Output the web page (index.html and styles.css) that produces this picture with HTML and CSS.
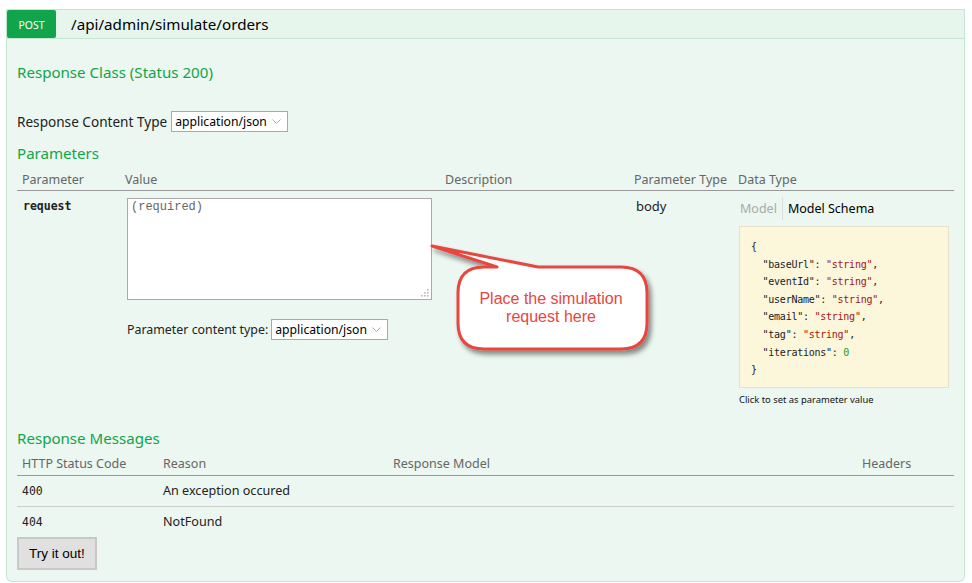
FILE: index.html
```html
<!DOCTYPE html>
<html>
<head>
<meta charset="utf-8">
<link rel="stylesheet" href="styles.css">
</head>
<body>
<div class="op">
  <div class="heading">
    <span class="badge">POST</span>
    <span class="path">/api/admin/simulate/orders</span>
  </div>
  <div class="content">
    <h4 class="h-class">Response Class (Status 200)</h4>
    <div class="ctype">
      <span class="ctype-label">Response Content Type</span>
      <div class="select">application/json<svg class="caret" width="9" height="6" viewBox="0 0 9 6"><polyline points="0.5,0.5 4.5,4.5 8.5,0.5" fill="none" stroke="#aaa" stroke-width="1"/></svg></div>
    </div>
    <h4 class="h-params">Parameters</h4>
    <table class="params">
      <colgroup><col class="c1"><col class="c2"><col class="c3"><col class="c4"><col class="c5"></colgroup>
      <thead>
        <tr><th>Parameter</th><th>Value</th><th>Description</th><th>Parameter Type</th><th>Data Type</th></tr>
      </thead>
      <tbody>
        <tr>
          <td class="pname">request</td>
          <td class="pvalue">
            <div class="ta-wrap">
              <textarea class="body-ta" placeholder="(required)"></textarea>
              <svg class="grip" width="8" height="8" viewBox="0 0 8 8">
                <rect x="6" y="0" width="1.6" height="1.6" fill="#bbb"/>
                <rect x="3" y="3" width="1.6" height="1.6" fill="#bbb"/>
                <rect x="6" y="3" width="1.6" height="1.6" fill="#bbb"/>
                <rect x="0" y="6" width="1.6" height="1.6" fill="#bbb"/>
                <rect x="3" y="6" width="1.6" height="1.6" fill="#bbb"/>
                <rect x="6" y="6" width="1.6" height="1.6" fill="#bbb"/>
              </svg>
            </div>
            <div class="pct">
              <span>Parameter content type:</span>
              <div class="select">application/json<svg class="caret" width="9" height="6" viewBox="0 0 9 6"><polyline points="0.5,0.5 4.5,4.5 8.5,0.5" fill="none" stroke="#aaa" stroke-width="1"/></svg></div>
            </div>
          </td>
          <td></td>
          <td class="ptype">body</td>
          <td class="dtype">
            <div class="tabs"><span class="tab-off">Model</span><span class="tab-on">Model Schema</span></div>
            <div class="schema">
              <div class="ln">{</div>
              <div class="ln">  <span class="k">"baseUrl"</span>: <span class="s">"string"</span>,</div>
              <div class="ln">  <span class="k">"eventId"</span>: <span class="s">"string"</span>,</div>
              <div class="ln">  <span class="k">"userName"</span>: <span class="s">"string"</span>,</div>
              <div class="ln">  <span class="k">"email"</span>: <span class="s">"string"</span>,</div>
              <div class="ln">  <span class="k">"tag"</span>: <span class="s">"string"</span>,</div>
              <div class="ln">  <span class="k">"iterations"</span>: <span class="n">0</span></div>
              <div class="ln">}</div>
            </div>
            <div class="hint">Click to set as parameter value</div>
          </td>
        </tr>
      </tbody>
    </table>
    <h4 class="h-resp">Response Messages</h4>
    <table class="resp">
      <colgroup><col class="r1"><col class="r2"><col class="r3"><col class="r4"></colgroup>
      <thead>
        <tr><th>HTTP Status Code</th><th>Reason</th><th>Response Model</th><th>Headers</th></tr>
      </thead>
      <tbody>
        <tr class="first"><td class="code">400</td><td>An exception occured</td><td></td><td></td></tr>
        <tr class="second"><td class="code">404</td><td>NotFound</td><td></td><td></td></tr>
      </tbody>
    </table>
    <button class="try">Try it out!</button>
  </div>
</div>

<svg class="callout" width="972" height="583" viewBox="0 0 972 583">
  <defs>
    <filter id="sh" x="-20%" y="-20%" width="150%" height="160%">
      <feGaussianBlur in="SourceAlpha" stdDeviation="2.5"/>
      <feOffset dx="3" dy="4" result="b"/>
      <feComponentTransfer><feFuncA type="linear" slope="0.45"/></feComponentTransfer>
      <feMerge><feMergeNode/><feMergeNode in="SourceGraphic"/></feMerge>
    </filter>
  </defs>
  <path filter="url(#sh)" d="M 484 267 L 497 267 L 432 246 L 538 267 L 621 267 Q 647 267 647 293 L 647 323 Q 647 349 621 349 L 484 349 Q 458 349 458 323 L 458 293 Q 458 267 484 267 Z" fill="#ffffff" stroke="#e8463f" stroke-width="3" stroke-linejoin="round"/>
  <text class="callout-text" x="551" y="304" text-anchor="middle">Place the simulation</text>
  <text class="callout-text" x="551" y="322" text-anchor="middle">request here</text>
</svg>
</body>
</html>
```

FILE: styles.css
```css
html, body {
  margin: 0;
  padding: 0;
  background: #ffffff;
}
body {
  position: relative;
  width: 972px;
  height: 583px;
  overflow: hidden;
  font-family: "Noto Sans", "Open Sans", sans-serif;
  font-size: 13px;
  color: #222;
}
.op {
  margin: 9px 0 0 6px;
  width: 959px;
}
.heading {
  display: flex;
  align-items: center;
  height: 28px;
  border: 1px solid #c3e8d1;
  background: #e7f6ec;
}
.badge {
  width: 49px;
  height: 28px;
  background: #10a54a;
  color: #fff;
  border-radius: 2px;
  font-size: 10.5px;
  line-height: 31px;
  text-align: center;
}
.path {
  margin-left: 15px;
  font-size: 15.2px;
  color: #000;
  line-height: 20px;
}
.content {
  border: 1px solid #c3e8d1;
  border-top: none;
  background: #ebf7f0;
  padding: 10px 10px 11px 10px;
  border-radius: 0 0 6px 6px;
}
h4 {
  margin: 0;
  font-weight: normal;
  font-size: 15.1px;
  line-height: 20px;
  color: #10a54a;
}
.h-class { margin-top: 13px; }
.h-params { margin-top: 11px; }
.h-resp { margin-top: 21px; }
.ctype {
  margin-top: 29px;
  display: flex;
  align-items: center;
  height: 21px;
}
.ctype-label {
  font-size: 13.6px;
  margin-right: 4px;
  color: #222;
}
.select {
  position: relative;
  box-sizing: border-box;
  width: 117px;
  height: 21px;
  border: 1px solid #a9a9a9;
  background: #fff;
  font-size: 12.2px;
  line-height: 19px;
  padding-left: 3px;
  color: #000;
}
.caret {
  position: absolute;
  right: 6px;
  top: 7px;
}
table {
  width: 100%;
  border-collapse: collapse;
  table-layout: fixed;
}
th {
  text-align: left;
  font-weight: normal;
  color: #666;
  font-size: 12.5px;
  line-height: 16px;
  padding: 9px 5px 2px 5px;
  border-bottom: 1px solid #999;
}
td {
  vertical-align: top;
  padding: 7px 5px 0 5px;
  line-height: 16px;
  color: #222;
}
.params .c1 { width: 103px; }
.params .c2 { width: 320px; }
.params .c3 { width: 189px; }
.params .c4 { width: 104px; }
.params .c5 { width: 221px; }
.pname {
  font-family: "DejaVu Sans Mono", monospace;
  font-weight: bold;
  font-size: 11.5px;
  padding-left: 6px;
}
.pvalue { padding-left: 7px; padding-top: 7px; }
.ta-wrap {
  position: relative;
  width: 305px;
  height: 102px;
}
.body-ta {
  display: block;
  box-sizing: border-box;
  width: 305px;
  height: 102px;
  margin: 0;
  border: 1px solid #aaa;
  background: #fff;
  padding: 1px 3px;
  font-family: "Liberation Mono", monospace;
  font-size: 12px;
  resize: none;
}
.body-ta::placeholder { color: #666; }
.grip {
  position: absolute;
  right: 3px;
  bottom: 3px;
}
.pct {
  margin-top: 19px;
  display: flex;
  align-items: center;
  height: 21px;
  font-size: 12.4px;
}
.pct span { margin-right: 3px; }
.ptype { padding-left: 7px; font-size: 13px; }
.dtype { padding-left: 6px; }
.tabs {
  display: flex;
  height: 20px;
  line-height: 20px;
  font-size: 12.5px;
  margin-top: 1px;
}
.tab-off {
  color: #aaa;
  padding: 0 5px 0 1px;
  border-right: 1px solid #ddd;
  height: 23px;
  margin-top: -2px;
  line-height: 24px;
}
.tab-on {
  color: #000;
  padding-left: 5px;
}
.schema {
  box-sizing: border-box;
  width: 210px;
  height: 162px;
  margin: 7px 0 0 0;
  padding: 11px 11px;
  background: #fcf6db;
  border: 1px solid #e5e0c6;
  font-family: "DejaVu Sans Mono", monospace;
  font-size: 10px;
  letter-spacing: -0.25px;
  line-height: 17.6px;
  color: #222;
}
.schema .ln {
  white-space: pre;
  height: 17.6px;
}
.schema .s { color: #a31515; }
.schema .n { color: #1a9c1a; }
.hint {
  margin-top: 5px;
  font-size: 9.4px;
  line-height: 14px;
  color: #111;
}
.resp .r1 { width: 141px; }
.resp .r2 { width: 230px; }
.resp .r3 { width: 469px; }
.resp .r4 { width: 97px; }
.resp th { padding: 8px 5px 3px 5px; }
.resp td {
  padding: 7px 5px 7px 5px;
  font-size: 12.6px;
}
.resp tr.first td { border-bottom: 1px solid #ccc; }
.resp td.code {
  font-family: "DejaVu Sans Mono", monospace;
  font-size: 11.5px;
}
.try {
  display: block;
  box-sizing: border-box;
  width: 80px;
  height: 33px;
  margin: 0;
  background: #e0e0e0;
  border: 2px solid #c8c8c8;
  font-family: "Liberation Sans", Arial, sans-serif;
  font-size: 13.5px;
  color: #000;
  padding: 0;
}
.callout {
  position: absolute;
  left: 0;
  top: 0;
  pointer-events: none;
}
.callout-text {
  font-family: "Liberation Sans", Arial, sans-serif;
  font-size: 16px;
  fill: #e8463f;
}
```
